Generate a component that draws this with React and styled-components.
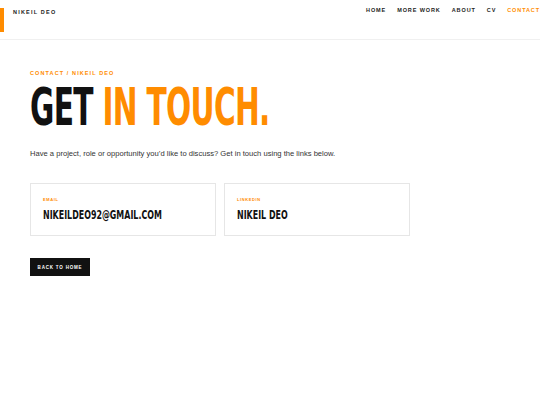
import styled, { createGlobalStyle } from "styled-components"

const GlobalStyle = createGlobalStyle`
  html, body {
    margin: 0;
    padding: 0;
    background: #ffffff;
  }
  body {
    font-family: "Liberation Sans", Arial, sans-serif;
    color: #111;
  }
`

const condensed = `"DejaVu Sans", "Liberation Sans", sans-serif`

function App() {
  return (
    <Page>
      <GlobalStyle />
      <Header>
        <Accent />
        <Brand>NIKEIL DEO</Brand>
        <Nav>
          <NavLink>HOME</NavLink>
          <NavLink>MORE WORK</NavLink>
          <NavLink>ABOUT</NavLink>
          <NavLink>CV</NavLink>
          <NavLink $active>CONTACT</NavLink>
        </Nav>
      </Header>
      <Main>
        <Crumb>CONTACT / NIKEIL DEO</Crumb>
        <Title>
          <Squeeze $scale={0.57}>GET <Highlight>IN TOUCH.</Highlight></Squeeze>
        </Title>
        <Lead>Have a project, role or opportunity you’d like to discuss? Get in touch using the links below.</Lead>
        <Cards>
          <Card>
            <CardLabel>EMAIL</CardLabel>
            <CardValue><Squeeze $scale={0.61}>NIKEILDEO92@GMAIL.COM</Squeeze></CardValue>
          </Card>
          <Card>
            <CardLabel>LINKEDIN</CardLabel>
            <CardValue><Squeeze $scale={0.61}>NIKEIL DEO</Squeeze></CardValue>
          </Card>
        </Cards>
        <BackButton>BACK TO HOME</BackButton>
      </Main>
    </Page>
  )
}

const Page = styled.div`
  width: 540px;
  min-height: 405px;
  background: #fff;
  overflow: hidden;
`

const Header = styled.header`
  display: flex;
  align-items: flex-start;
  height: 39px;
  border-bottom: 1px solid #f0f0f0;
`

const Accent = styled.div`
  width: 4px;
  height: 24px;
  margin-top: 8px;
  background: #ff8c00;
`

const Brand = styled.div`
  margin-left: 9px;
  margin-top: 9px;
  font-size: 5.5px;
  font-weight: 700;
  letter-spacing: 1.2px;
  color: #222;
`

const Nav = styled.nav`
  display: flex;
  gap: 11px;
  margin-left: auto;
  margin-top: 7px;
  margin-right: 0;
`

const NavLink = styled.a`
  font-size: 5.5px;
  font-weight: 700;
  letter-spacing: 0.9px;
  white-space: nowrap;
  color: ${p => (p.$active ? "#ff8c00" : "#222")};
`

const Main = styled.main`
  padding: 30px 30px 0;
`

const Crumb = styled.div`
  font-size: 5.5px;
  font-weight: 700;
  letter-spacing: 1.1px;
  color: #ff8c00;
`

const Squeeze = styled.span`
  display: inline-block;
  white-space: nowrap;
  transform: scaleX(${p => p.$scale});
  transform-origin: left center;
`

const Title = styled.h1`
  margin: 6px 0 0;
  font-family: ${condensed};
  font-size: 52px;
  line-height: 50px;
  font-weight: 700;
  color: #111;
  letter-spacing: -1.2px;
`

const Highlight = styled.span`
  color: #ff8c00;
`

const Lead = styled.p`
  margin: 17px 0 0;
  font-size: 7.6px;
  color: #333;
`

const Cards = styled.div`
  display: flex;
  gap: 8px;
  margin-top: 25px;
`

const Card = styled.div`
  width: 160px;
  height: 38px;
  padding: 13px 12px 0 12px;
  border: 1px solid #e6e6e6;
`

const CardLabel = styled.div`
  font-size: 4px;
  font-weight: 700;
  letter-spacing: 0.6px;
  color: #ff8c00;
`

const CardValue = styled.div`
  margin-top: 5px;
  font-family: ${condensed};
  font-size: 13px;
  font-weight: 700;
  color: #111;
`

const BackButton = styled.button`
  display: block;
  margin-top: 22px;
  width: 60px;
  height: 18px;
  border: none;
  background: #111;
  color: #fff;
  font-family: "Liberation Sans", Arial, sans-serif;
  font-size: 4.5px;
  font-weight: 700;
  letter-spacing: 0.8px;
  padding: 0;
`

export default App
